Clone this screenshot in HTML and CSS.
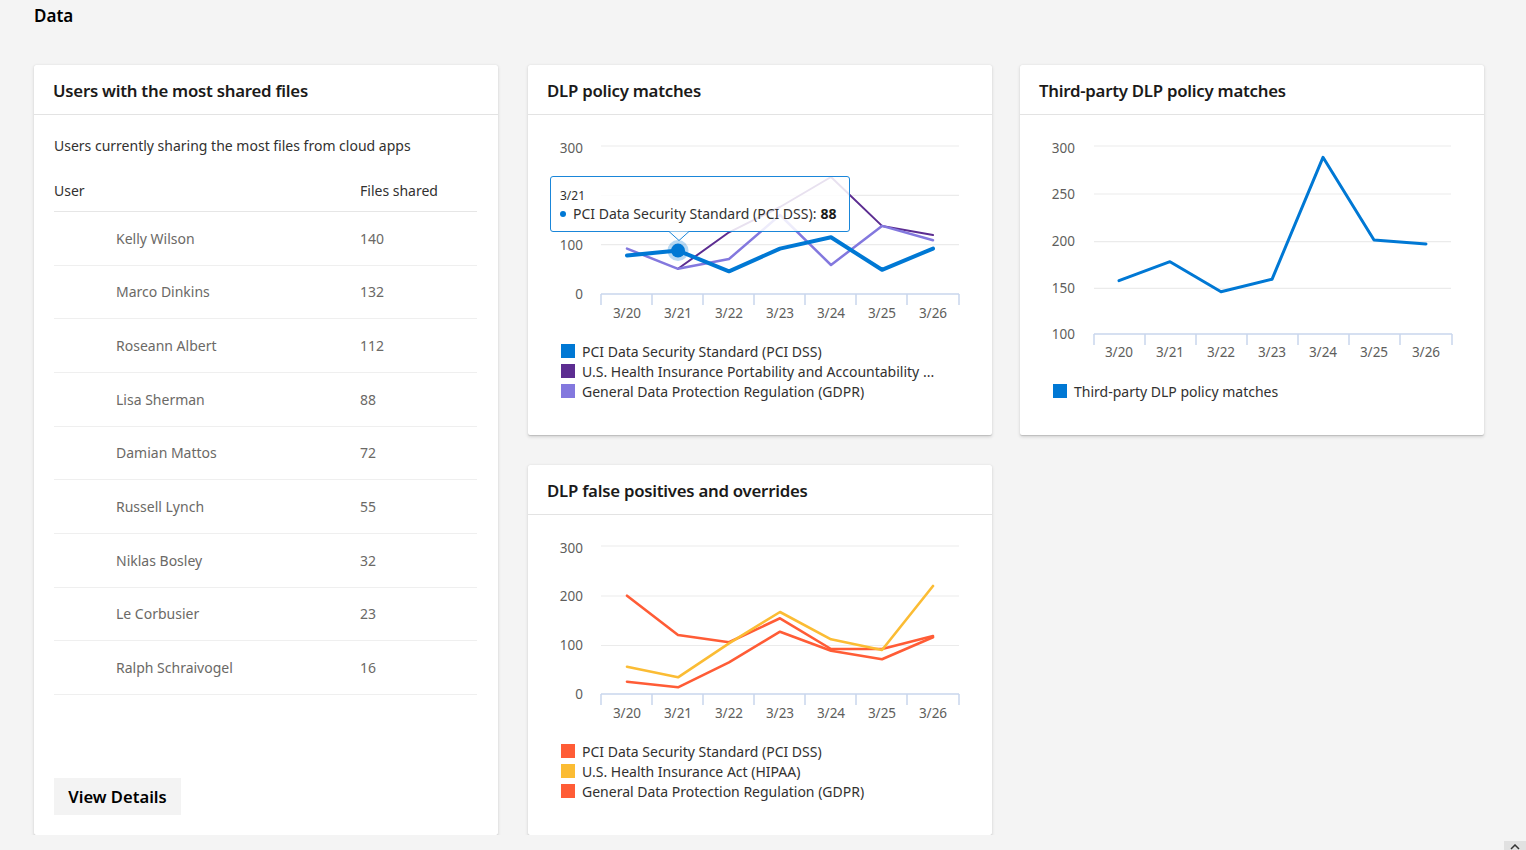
FILE: index.html
```html
<!DOCTYPE html>
<html lang="en">
<head>
<meta charset="utf-8">
<title>Data</title>
<link rel="stylesheet" href="styles.css">
</head>
<body>
<main class="page">
  <h1 class="page-title">Data</h1>
  <div class="grid">
    <section class="card card-users">
      <header class="card-head"><h2>Users with the most shared files</h2></header>
      <div class="users-body">
        <p class="subtitle">Users currently sharing the most files from cloud apps</p>
        <div class="table">
          <div class="thead"><span class="col-user">User</span><span class="col-val">Files shared</span></div>
          <div class="row"><span class="name">Kelly Wilson</span><span class="val">140</span></div>
          <div class="row"><span class="name">Marco Dinkins</span><span class="val">132</span></div>
          <div class="row"><span class="name">Roseann Albert</span><span class="val">112</span></div>
          <div class="row"><span class="name">Lisa Sherman</span><span class="val">88</span></div>
          <div class="row"><span class="name">Damian Mattos</span><span class="val">72</span></div>
          <div class="row"><span class="name">Russell Lynch</span><span class="val">55</span></div>
          <div class="row"><span class="name">Niklas Bosley</span><span class="val">32</span></div>
          <div class="row"><span class="name">Le Corbusier</span><span class="val">23</span></div>
          <div class="row"><span class="name">Ralph Schraivogel</span><span class="val">16</span></div>
        </div>
        <button class="btn">View Details</button>
      </div>
    </section>

    <section class="card card-dlp">
      <header class="card-head"><h2>DLP policy matches</h2></header>
      <div class="chart-body">
        <svg class="chart chart-short" width="464" height="226" viewBox="0 0 464 226">
          <g class="grid-lines">
            <line x1="73" y1="31" x2="431" y2="31"/>
            <line x1="73" y1="80.3" x2="431" y2="80.3"/>
            <line x1="73" y1="129.7" x2="431" y2="129.7"/>
          </g>
          <g class="axis">
            <line x1="73" y1="179" x2="431" y2="179"/>
            <line x1="73" y1="179" x2="73" y2="190"/>
            <line x1="124" y1="179" x2="124" y2="190"/>
            <line x1="175" y1="179" x2="175" y2="190"/>
            <line x1="226" y1="179" x2="226" y2="190"/>
            <line x1="277" y1="179" x2="277" y2="190"/>
            <line x1="328" y1="179" x2="328" y2="190"/>
            <line x1="379" y1="179" x2="379" y2="190"/>
            <line x1="431" y1="179" x2="431" y2="190"/>
          </g>
          <g class="ylabels">
            <text x="55" y="38">300</text>
            <text x="55" y="135">100</text>
            <text x="55" y="184">0</text>
          </g>
          <g class="xlabels">
            <text x="99" y="203">3/20</text>
            <text x="150" y="203">3/21</text>
            <text x="201" y="203">3/22</text>
            <text x="252" y="203">3/23</text>
            <text x="303" y="203">3/24</text>
            <text x="354" y="203">3/25</text>
            <text x="405" y="203">3/26</text>
          </g>
          <path class="ln ln-hipaa" d="M150,153.8 L201,117.3 L252,92 L303,62 L354,110.9 L405,120"/>
          <path class="ln ln-gdpr" d="M99,133.6 L150,153.8 L201,144 L252,100 L303,150 L354,110.9 L405,125.2"/>
          <path class="ln ln-pci" d="M99,140.5 L150,135.6 L201,156.3 L252,133.6 L303,122.3 L354,154.8 L405,133.6"/>
          <circle class="halo" cx="150" cy="135.6" r="10.5"/>
          <circle class="dot" cx="150" cy="135.6" r="7"/>
        </svg>
        <div class="tooltip">
          <div class="tip-date">3/21</div>
          <div class="tip-line"><span class="tip-dot"></span>PCI Data Security Standard (PCI DSS): <b>88</b></div>
          <svg class="tip-arrow" width="20" height="10" viewBox="0 0 20 10"><path d="M0,0.5 L10,9.5 L20,0.5"/></svg>
        </div>
        <ul class="legend">
          <li><span class="sw sw-blue"></span>PCI Data Security Standard (PCI DSS)</li>
          <li><span class="sw sw-dpurple"></span>U.S. Health Insurance Portability and Accountability ...</li>
          <li><span class="sw sw-lpurple"></span>General Data Protection Regulation (GDPR)</li>
        </ul>
      </div>
    </section>

    <section class="card card-third">
      <header class="card-head"><h2>Third-party DLP policy matches</h2></header>
      <div class="chart-body">
        <svg class="chart" width="464" height="266" viewBox="0 0 464 266">
          <g class="grid-lines">
            <line x1="74" y1="31" x2="431" y2="31"/>
            <line x1="74" y1="79" x2="431" y2="79"/>
            <line x1="74" y1="126.7" x2="431" y2="126.7"/>
            <line x1="74" y1="173.3" x2="431" y2="173.3"/>
          </g>
          <g class="axis">
            <line x1="74" y1="219" x2="432" y2="219"/>
            <line x1="74" y1="219" x2="74" y2="230"/>
            <line x1="125" y1="219" x2="125" y2="230"/>
            <line x1="176" y1="219" x2="176" y2="230"/>
            <line x1="227" y1="219" x2="227" y2="230"/>
            <line x1="278" y1="219" x2="278" y2="230"/>
            <line x1="329" y1="219" x2="329" y2="230"/>
            <line x1="380" y1="219" x2="380" y2="230"/>
            <line x1="432" y1="219" x2="432" y2="230"/>
          </g>
          <g class="ylabels">
            <text x="55" y="38">300</text>
            <text x="55" y="84">250</text>
            <text x="55" y="131">200</text>
            <text x="55" y="178">150</text>
            <text x="55" y="224">100</text>
          </g>
          <g class="xlabels">
            <text x="99" y="242">3/20</text>
            <text x="150" y="242">3/21</text>
            <text x="201" y="242">3/22</text>
            <text x="252" y="242">3/23</text>
            <text x="303" y="242">3/24</text>
            <text x="354" y="242">3/25</text>
            <text x="406" y="242">3/26</text>
          </g>
          <path class="ln ln-third" d="M99,165.7 L150,146.7 L201,176.7 L252,164.3 L303,42.3 L354,125 L406,129"/>
        </svg>
        <ul class="legend">
          <li><span class="sw sw-blue"></span>Third-party DLP policy matches</li>
        </ul>
      </div>
    </section>

    <section class="card card-fp">
      <header class="card-head"><h2>DLP false positives and overrides</h2></header>
      <div class="chart-body">
        <svg class="chart" width="464" height="226" viewBox="0 0 464 226">
          <g class="grid-lines">
            <line x1="73" y1="31" x2="431" y2="31"/>
            <line x1="73" y1="81" x2="431" y2="81"/>
            <line x1="73" y1="130.5" x2="431" y2="130.5"/>
          </g>
          <g class="axis">
            <line x1="73" y1="179" x2="431" y2="179"/>
            <line x1="73" y1="179" x2="73" y2="190"/>
            <line x1="124" y1="179" x2="124" y2="190"/>
            <line x1="175" y1="179" x2="175" y2="190"/>
            <line x1="226" y1="179" x2="226" y2="190"/>
            <line x1="277" y1="179" x2="277" y2="190"/>
            <line x1="328" y1="179" x2="328" y2="190"/>
            <line x1="379" y1="179" x2="379" y2="190"/>
            <line x1="431" y1="179" x2="431" y2="190"/>
          </g>
          <g class="ylabels">
            <text x="55" y="38">300</text>
            <text x="55" y="86">200</text>
            <text x="55" y="135">100</text>
            <text x="55" y="184">0</text>
          </g>
          <g class="xlabels">
            <text x="99" y="203">3/20</text>
            <text x="150" y="203">3/21</text>
            <text x="201" y="203">3/22</text>
            <text x="252" y="203">3/23</text>
            <text x="303" y="203">3/24</text>
            <text x="354" y="203">3/25</text>
            <text x="405" y="203">3/26</text>
          </g>
          <path class="ln ln-red" d="M99,80.7 L150,120 L201,127.3 L252,103.3 L303,134 L354,134 L405,121"/>
          <path class="ln ln-red" d="M99,166.7 L150,172.3 L201,147.3 L252,116.7 L303,135.7 L354,144.3 L405,122.3"/>
          <path class="ln ln-yellow" d="M99,151.7 L150,162.3 L201,128.3 L252,97 L303,124.3 L354,135 L405,71"/>
        </svg>
        <ul class="legend">
          <li><span class="sw sw-red"></span>PCI Data Security Standard (PCI DSS)</li>
          <li><span class="sw sw-yellow"></span>U.S. Health Insurance Act (HIPAA)</li>
          <li><span class="sw sw-red"></span>General Data Protection Regulation (GDPR)</li>
        </ul>
      </div>
    </section>
  </div>
</main>
<div class="to-top"><svg width="10" height="6" viewBox="0 0 10 6"><path d="M1,5 L5,1 L9,5"/></svg></div>
</body>
</html>
```

FILE: styles.css
```css
* { box-sizing: border-box; }

html, body {
  margin: 0;
  background: #f4f4f4;
  font-family: "Noto Sans", "Open Sans", sans-serif;
  color: #323130;
  overflow: hidden;
}

.page {
  padding: 0 0 0 34px;
}

.page-title {
  margin: 0;
  height: 31px;
  line-height: 31px;
  font-size: 17px;
  font-weight: 600;
  color: #000;
}

.grid {
  margin-top: 34px;
  display: grid;
  grid-template-columns: 464px 494px 492px;
  grid-template-rows: 370px 370px;
  row-gap: 30px;
}

.card {
  width: 464px;
  justify-self: end;
  background: #fff;
  border-radius: 2px;
  box-shadow: 0 1.6px 3.6px rgba(0, 0, 0, 0.14), 0 0.3px 0.9px rgba(0, 0, 0, 0.12);
  display: flex;
  flex-direction: column;
  overflow: hidden;
}

.card-users { grid-column: 1; grid-row: 1 / 3; }
.card-dlp { grid-column: 2; grid-row: 1; }
.card-third { grid-column: 3; grid-row: 1; }
.card-fp { grid-column: 2; grid-row: 2; }

.card-head {
  height: 50px;
  flex: none;
  display: flex;
  align-items: center;
  padding: 1px 19px 0;
  border-bottom: 1px solid #e3e3e3;
}

.card-head h2 {
  margin: 0;
  font-size: 16.8px;
  font-weight: 600;
  color: #1b1a19;
  letter-spacing: -0.25px;
}

/* users card */
.users-body {
  flex: 1;
  display: flex;
  flex-direction: column;
  padding: 0 21px 20px 20px;
}

.subtitle {
  margin: 21px 0 0;
  font-size: 14px;
  line-height: 20px;
  color: #323130;
}

.table {
  margin-top: 14px;
}

.thead {
  height: 42px;
  display: flex;
  align-items: center;
  border-bottom: 1px solid #e6e6e6;
  font-size: 14px;
  color: #323130;
}

.col-user { width: 306px; }

.row {
  height: 53.67px;
  display: flex;
  align-items: center;
  border-bottom: 1px solid #efefef;
  font-size: 14px;
  color: #6b6966;
}

.name {
  width: 306px;
  padding-left: 62px;
}

.btn {
  margin-top: auto;
  align-self: flex-start;
  width: 127px;
  height: 37px;
  border: none;
  border-radius: 0;
  background: #f3f3f3;
  font-family: inherit;
  font-size: 16.6px;
  font-weight: 600;
  color: #000;
  padding: 0;
}

/* charts */
.chart-body {
  position: relative;
  flex: 1;
}

.chart {
  display: block;
}

.grid-lines line {
  stroke: #ebebeb;
  stroke-width: 1.2;
}

.axis line {
  stroke: #c8d6ec;
  stroke-width: 1.5;
}

.ylabels text {
  text-anchor: end;
  font-size: 13.5px;
  fill: #605e5c;
}

.xlabels text {
  text-anchor: middle;
  font-size: 13.5px;
  fill: #605e5c;
}

.ln {
  fill: none;
  stroke-linejoin: round;
  stroke-linecap: round;
}

.ln-pci { stroke: #0078d4; stroke-width: 4; }
.ln-hipaa { stroke: #5c2d91; stroke-width: 2; }
.ln-gdpr { stroke: #8378de; stroke-width: 2.5; }
.ln-third { stroke: #0078d4; stroke-width: 3; }
.ln-red { stroke: #ff5c36; stroke-width: 2.6; }
.ln-yellow { stroke: #fbbc34; stroke-width: 2.6; }

.halo { fill: rgba(0, 120, 212, 0.28); }
.dot { fill: #0078d4; }

.tooltip {
  position: absolute;
  left: 22px;
  top: 61px;
  width: 300px;
  height: 56px;
  background: rgba(255, 255, 255, 0.86);
  border: 1px solid #1a86d9;
  border-radius: 3px;
  padding: 11px 0 0 9px;
  color: #323130;
}

.tip-date {
  font-size: 12px;
  line-height: 16px;
}

.tip-line {
  font-size: 14px;
  line-height: 20px;
  white-space: nowrap;
  display: flex;
  align-items: center;
}

.tip-line b {
  font-weight: 700;
  margin-left: 4px;
  color: #1b1a19;
}

.tip-dot {
  width: 6px;
  height: 6px;
  border-radius: 50%;
  background: #0078d4;
  margin-right: 7px;
}

.tip-arrow {
  position: absolute;
  left: 118px;
  bottom: -10px;
}

.tip-arrow path {
  fill: #fdfdfd;
  stroke: #1a86d9;
  stroke-width: 1;
}

.legend {
  list-style: none;
  margin: 0;
  padding: 0 0 0 33px;
}

.legend li {
  display: flex;
  align-items: center;
  height: 20px;
  font-size: 14px;
  color: #323130;
  white-space: nowrap;
}

.sw {
  width: 14px;
  height: 14px;
  margin-right: 7px;
  flex: none;
}

.sw-blue { background: #0078d4; }
.sw-dpurple { background: #5c2d91; }
.sw-lpurple { background: #8378de; }
.sw-red { background: #ff5c36; }
.sw-yellow { background: #fbbc34; }

.to-top {
  position: fixed;
  right: 0;
  bottom: -20px;
  width: 22px;
  height: 29px;
  background: #e1e1e1;
  display: flex;
  justify-content: center;
  padding-top: 3px;
}

.to-top path {
  fill: none;
  stroke: #333;
  stroke-width: 1.5;
}
```
